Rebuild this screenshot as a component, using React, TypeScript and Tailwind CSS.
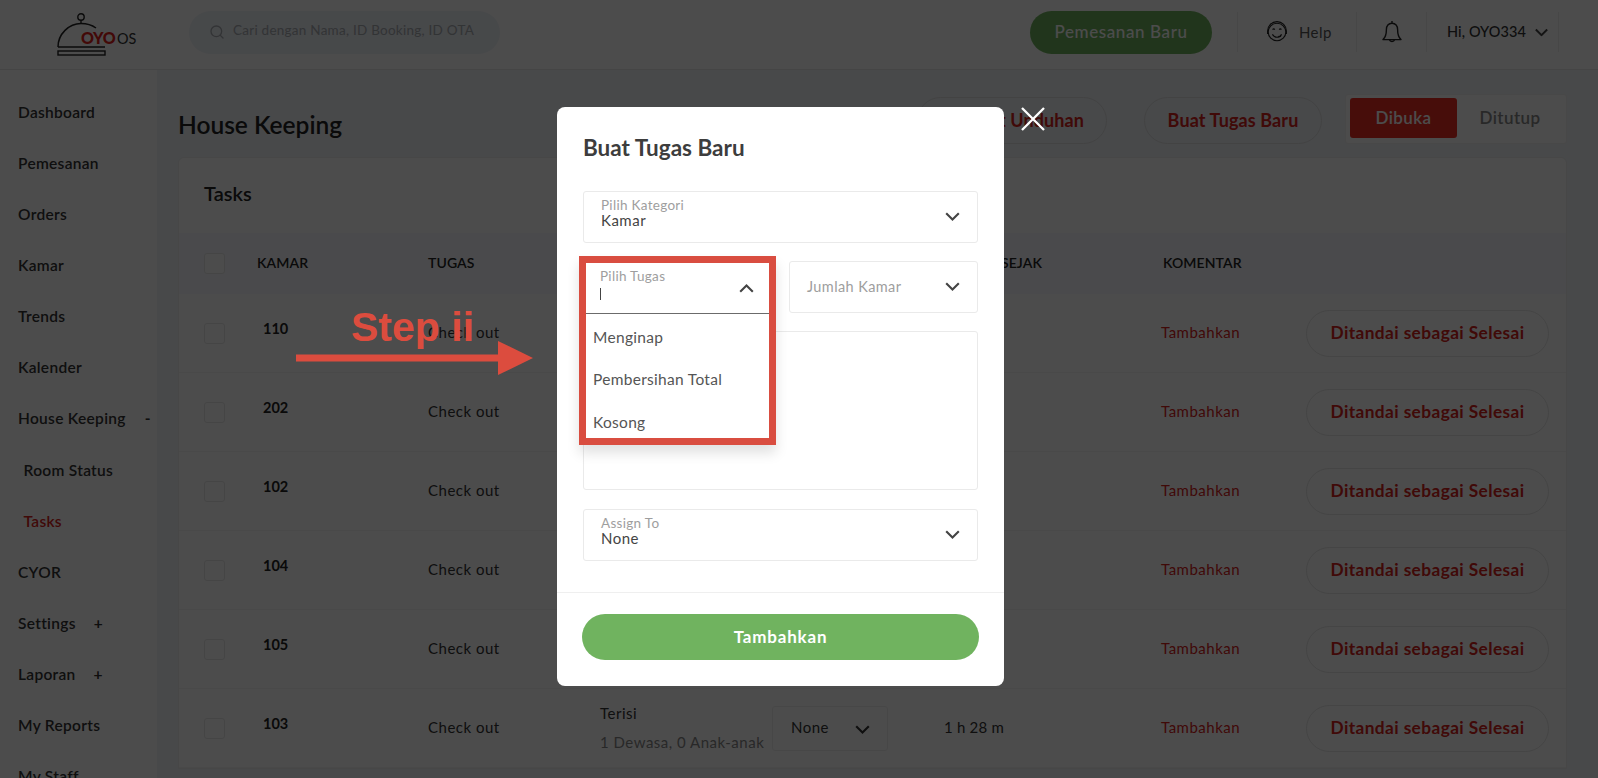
import React from "react";
import { Search } from "lucide-react";

const FONT = "font-['Lato','Noto_Sans',sans-serif]";

function Chevron({ up = false, className = "" }: { up?: boolean; className?: string }) {
  return (
    <svg viewBox="0 0 15 9" className={`w-[15px] h-[9px] shrink-0 ${className}`} fill="none">
      <path d={up ? "M1.2 7.8 7.5 1.5l6.3 6.3" : "M1.2 1.2 7.5 7.5l6.3-6.3"} stroke="currentColor" strokeWidth="2.1" />
    </svg>
  );
}

function Logo() {
  return (
    <div className="relative w-[78px] h-[43px] shrink-0 mt-[5px]">
      <svg viewBox="0 0 50 43" className="absolute left-0 top-0 w-[50px] h-[43px] text-[#222]" fill="none" stroke="currentColor">
        <circle cx="24" cy="4" r="3.2" strokeWidth="1.4" />
        <path d="M24 7.5v3" strokeWidth="1.4" />
        <path d="M1 34C1 21 12 10.5 24 10.5c6 0 11 1.6 15 4.5" strokeWidth="1.5" />
        <path d="M1 34h47" strokeWidth="1.5" />
        <rect x="1" y="38" width="47" height="4" strokeWidth="1.4" />
      </svg>
      <span className="absolute left-[24px] top-[15px] text-[16px] leading-[20px] font-black text-[#e0211a] tracking-[-0.2px]">OYO</span>
      <span className="absolute left-[60px] top-[15px] text-[16px] leading-[20px] text-[#333] scale-x-90 origin-left">OS</span>
    </div>
  );
}

function Divider() {
  return <div className="w-px h-[40px] bg-[#eeeeee] shrink-0" />;
}

function Header() {
  return (
    <header className="h-[70px] bg-white border-b border-[#e8e8e8] flex items-center pl-[57px] pb-[5px] shrink-0">
      <Logo />
      <div className="ml-[54px] w-[311px] h-[43px] rounded-full bg-[#eff3f8] flex items-center pl-[20px] text-[#a9adb3]">
        <Search size={16} strokeWidth={2} className="shrink-0" />
        <span className="ml-[8px] pb-[3px] text-[13.5px] tracking-[0.25px] whitespace-nowrap">Cari dengan Nama, ID Booking, ID OTA</span>
      </div>
      <div className="flex-1" />
      <button className="w-[182px] h-[43px] rounded-full bg-[#70b35f] text-white text-[17px] font-medium tracking-[0.6px]">Pemesanan Baru</button>
      <div className="ml-[25px]"><Divider /></div>
      <div className="w-[118px] flex items-center pl-[27px] gap-[10px] text-[#555]">
        <svg viewBox="0 0 24 24" className="w-[24px] h-[24px] text-[#222]" fill="none" stroke="currentColor" strokeWidth="1.1">
          <circle cx="12" cy="12" r="8.8" />
          <path d="M2.6 14v-3a9.4 9.4 0 0 1 18.8 0v3" />
          <path d="M7.6 9.6c.6-1 1.6-1 2.2 0M14.2 9.6c.6-1 1.6-1 2.2 0" />
          <path d="M7.4 14.4c1.2 2 3 2.8 4.6 2.8s3.4-.8 4.6-2.8" />
          <path d="M13.6 15.8c.4 1.2 2 1.2 2.4-.2" />
        </svg>
        <span className="text-[15px] tracking-[0.4px]">Help</span>
      </div>
      <Divider />
      <div className="w-[69px] flex justify-center text-[#222]">
        <svg viewBox="0 0 20 25" className="w-[20px] h-[25px]" fill="none" stroke="currentColor" strokeWidth="1.4" strokeLinejoin="round">
          <path d="M10 1v2.2M10 3.2c-3.6 0-5.6 2.8-5.6 6.2 0 5.2-.6 7.6-3.4 10.2h18c-2.8-2.6-3.4-5-3.4-10.2 0-3.4-2-6.2-5.6-6.2z" />
          <path d="M7.4 19.6a2.7 2.7 0 0 0 5.2 0" />
        </svg>
      </div>
      <Divider />
      <div className="w-[131px] flex items-center pl-[20px] text-[#333]">
        <span className="text-[14.5px] font-medium tracking-[0.1px] whitespace-nowrap">Hi, OYO334</span>
        <Chevron className="ml-[8px] text-[#444] scale-90" />
      </div>
      <Divider />
      <div className="w-[39px]" />
    </header>
  );
}

const NAV: { t: string; sign?: string; signW?: string; sub?: boolean; active?: boolean }[] = [
  { t: "Dashboard" },
  { t: "Pemesanan" },
  { t: "Orders" },
  { t: "Kamar" },
  { t: "Trends" },
  { t: "Kalender" },
  { t: "House Keeping", sign: "-", signW: "ml-[19px]" },
  { t: "Room Status", sub: true },
  { t: "Tasks", sub: true, active: true },
  { t: "CYOR" },
  { t: "Settings", sign: "+", signW: "ml-[18px]" },
  { t: "Laporan", sign: "+", signW: "ml-[18px]" },
  { t: "My Reports" },
  { t: "My Staff" },
];

function Sidebar() {
  return (
    <aside className="w-[157px] shrink-0 bg-white pt-[17px] overflow-hidden">
      {NAV.map((n) => (
        <div
          key={n.t}
          className={`h-[51.1px] flex items-center text-[15.5px] font-semibold tracking-[0.3px] ${n.sub ? "pl-[23.5px]" : "pl-[18px]"} ${n.active ? "text-[#d8231c]" : "text-[#333]"}`}
        >
          {n.t}
          {n.sign && <span className={`${n.signW} font-bold`}>{n.sign}</span>}
        </div>
      ))}
    </aside>
  );
}

const COLS = "grid grid-cols-[53px_171px_172px_172px_172px_219px_143px_243px] pl-[25px] items-center";

function Checkbox() {
  return <div className="w-[21px] h-[21px] rounded-[3px] border border-[#e6e6e6] bg-white" />;
}

const ROWS = ["110", "202", "102", "104", "105", "103"];

function Row({ room }: { room: string }) {
  return (
    <div className={`${COLS} h-[79px] border-b border-[#f3f3f3] bg-white text-[15px] tracking-[0.5px] text-[#333]`}>
      <Checkbox />
      <div className="pl-[6px] pb-[8px] text-[14.5px] font-bold text-[#222] tracking-normal">{room}</div>
      <div className="pb-[2px]">Check out</div>
      <div className="flex flex-col gap-[6px] pb-[1px] whitespace-nowrap">
        <span>Terisi</span>
        <span className="text-[#888]">1 Dewasa, 0 Anak-anak</span>
      </div>
      <div className="w-[116px] h-[45px] rounded-[3px] border border-[#eeeeee] flex items-center justify-between pl-[18px] pr-[17px]">
        <span className="pb-[2px]">None</span>
        <Chevron className="mt-[3px]" />
      </div>
      <div className="pb-[2px] tracking-[0.2px]">1 h 28 m</div>
      <div className="-ml-[2px] pb-[1px] text-[#d8231c] text-[15px]">Tambahkan</div>
      <button className="w-[243px] h-[47px] rounded-full border border-[#e6e6e6] text-[#d8231c] text-[17.3px] font-bold tracking-[0.4px] whitespace-nowrap">
        Ditandai sebagai Selesai
      </button>
    </div>
  );
}

function Content() {
  return (
    <main className="flex-1 bg-[#f0f4f9] pl-[21px] pr-[31px] overflow-hidden">
      <div className="h-[87px] flex items-center">
        <h1 className="text-[24.5px] font-semibold text-[#222] pt-[24px]">House Keeping</h1>
        <div className="flex-1" />
        <button className="w-[190px] h-[47px] rounded-full border border-[#e0e0e0] text-[#d8231c] text-[18px] font-bold tracking-[0.1px] text-right pr-[22px] mt-[13px]">Buat Unduhan</button>
        <button className="ml-[37px] w-[178px] h-[47px] rounded-full border border-[#e0e0e0] text-[#d8231c] text-[18px] font-bold tracking-[0.1px] mt-[13px]">Buat Tugas Baru</button>
        <div className="ml-[23px] w-[222px] h-[50px] mt-[10px] rounded-[3px] bg-white border border-[#f0f0f0] flex items-start p-[3px] pl-[4px] text-[17px] font-semibold">
          <div className="w-[107px] h-[40px] rounded-[3px] bg-[#ee2e24] text-white flex items-center justify-center tracking-[0.4px]">Dibuka</div>
          <div className="flex-1 h-[40px] flex items-center justify-center text-[#888] tracking-[0.4px]">Ditutup</div>
        </div>
      </div>
      <section className="rounded-t-[6px] border border-[#ededed] bg-white">
        <div className="h-[75px] flex items-center pl-[25px] pb-[6px] text-[20px] font-semibold text-[#222]">Tasks</div>
        <div className={`${COLS} h-[61px] bg-[#f7f9fd] text-[14px] tracking-[0.1px] font-semibold text-[#222]`}>
          <Checkbox />
          <div className="pb-[2px]">KAMAR</div>
          <div className="pb-[2px]">TUGAS</div>
          <div className="pb-[2px]">STATUS</div>
          <div className="pb-[2px]">ASSIGN TO</div>
          <div className="pb-[2px]">DIBUKA SEJAK</div>
          <div className="pb-[2px]">KOMENTAR</div>
          <div />
        </div>
        {ROWS.map((r) => (
          <Row key={r} room={r} />
        ))}
      </section>
    </main>
  );
}

function Field({ label, value, muted = false }: { label?: string; value: string; muted?: boolean }) {
  return (
    <div className="h-[52px] rounded-[3px] border border-[#eaeaea] flex items-center justify-between pl-[17px] pr-[17px] text-[#444]">
      {label ? (
        <div className="flex flex-col pb-[9px]">
          <span className="text-[13.5px] leading-[15px] text-[#9e9e9e] tracking-[0.3px]">{label}</span>
          <span className="text-[15px] leading-[14px] tracking-[0.5px]">{value}</span>
        </div>
      ) : (
        <span className={`text-[14.5px] tracking-[0.4px] ${muted ? "text-[#9e9e9e]" : ""}`}>{value}</span>
      )}
      <Chevron className="-mt-[1px]" />
    </div>
  );
}

function Modal() {
  return (
    <div className="absolute left-[557px] top-[107px] w-[447px] h-[579px] rounded-[8px] bg-white">
      <svg viewBox="0 0 24 24" className="absolute left-[464px] top-[0px] w-[24px] h-[24px] text-white" fill="none" stroke="currentColor" strokeWidth="2.3">
        <path d="M1 1l22 22M23 1 1 23" />
      </svg>
      <div className="px-[26px]">
        <h2 className="mt-[26px] h-[30px] leading-[30px] text-[22.5px] font-bold text-[#3d3d3d]">Buat Tugas Baru</h2>
        <div className="mt-[28px]"><Field label="Pilih Kategori" value="Kamar" /></div>
        <div className="mt-[18px] flex gap-[18px] h-[52px]">
          <div className="w-[188px] relative">
            <div className="h-[53px] bg-white border-b border-[#6b6b6b] flex items-center justify-between pl-[17px] pr-[17px] text-[#444]">
              <div className="flex flex-col pb-[6px]">
                <span className="text-[13.5px] leading-[15px] text-[#9e9e9e] tracking-[0.3px]">Pilih Tugas</span>
                <span className="mt-[4px] w-px h-[12px] bg-[#444]" />
              </div>
              <Chevron up className="mt-[3px]" />
            </div>
            <div className="absolute z-10 left-[3px] right-0 top-[53px] h-[125px] bg-white overflow-hidden pt-[2px] pl-[7px] text-[15.5px] tracking-[0.3px] text-[#555]">
              <div className="h-[42.5px] flex items-center">Menginap</div>
              <div className="h-[42.5px] flex items-center">Pembersihan Total</div>
              <div className="h-[42.5px] flex items-center">Kosong</div>
            </div>
            <div className="absolute z-20 -left-[4px] -top-[5px] w-[197px] h-[189px] border-[7px] border-[#d94d40] shadow-[0_8px_12px_rgba(0,0,0,0.12)]" />
          </div>
          <div className="flex-1"><Field value="Jumlah Kamar" muted /></div>
        </div>
        <textarea className="mt-[18px] block w-full h-[159px] rounded-[3px] border border-[#eaeaea] resize-none" />
        <div className="mt-[19px]"><Field label="Assign To" value="None" /></div>
      </div>
      <div className="mt-[31px] border-t border-[#efefef] px-[25px] pt-[21px]">
        <button className="w-[397px] h-[46px] rounded-full bg-[#70b35f] text-white text-[17px] font-bold tracking-[0.8px]">Tambahkan</button>
      </div>
    </div>
  );
}

function StepNote() {
  return (
    <div className="absolute left-[296px] top-[304px] text-[#dc4c3e] pointer-events-none">
      <div className="ml-[55px] text-[41px] leading-[46px] font-bold font-['Liberation_Sans',sans-serif]">Step ii</div>
      <svg viewBox="0 0 237 36" className="w-[237px] h-[36px] -mt-[10px]" fill="currentColor">
        <path d="M0 14.5h202V1l35 17-35 17V21.5H0z" />
      </svg>
    </div>
  );
}

export default function App() {
  return (
    <div className={`relative w-[1598px] h-[778px] overflow-hidden flex flex-col ${FONT}`}>
      <Header />
      <div className="flex flex-1 min-h-0">
        <Sidebar />
        <Content />
      </div>
      <div className="absolute inset-0 bg-black/70">
        <Modal />
        <StepNote />
      </div>
    </div>
  );
}
